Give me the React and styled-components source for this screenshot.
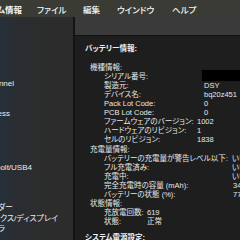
import React from "react";
import styled, { createGlobalStyle } from "styled-components";

const Global = createGlobalStyle`
  html, body { margin: 0; padding: 0; background: #1e1e1e; overflow: hidden; }
  * { box-sizing: border-box; }
`;

const Screen = styled.div`
  width: 240px;
  height: 240px;
  display: flex;
  flex-direction: column;
  overflow: hidden;
  font-family: "Liberation Sans", "Noto Sans CJK JP", sans-serif;
  font-feature-settings: "palt";
  color: #e8e8e8;
`;

const MenuBar = styled.div`
  height: 17px;
  flex: none;
  display: flex;
  align-items: center;
  background: #3b3b36;
  font-size: 8.5px;
  color: #f6f6f6;
  font-weight: 500;
`;

const MenuItem = styled.div`
  width: ${(p) => (p.$w ? `${p.$w}px` : "auto")};
  flex: none;
  display: flex;
  justify-content: ${(p) => (p.$end ? "flex-end" : "flex-start")};
  white-space: nowrap;
  font-weight: ${(p) => (p.$bold ? 700 : 500)};
  margin-right: ${(p) => (p.$mr ? `${p.$mr}px` : "0")};
`;

const Body = styled.div`
  flex: 1;
  display: flex;
  min-height: 0;
`;

const Sidebar = styled.div`
  width: 75px;
  flex: none;
  display: flex;
  flex-direction: column;
  overflow: hidden;
  background: linear-gradient(90deg, #25303a 0px, #2a2d31 18px, #2c2c2c 45px);
  border-right: 2px solid #141414;
  font-size: 8px;
  color: #ececec;
`;

const SideItem = styled.div`
  width: ${(p) => p.$end}px;
  height: 10px;
  line-height: 10px;
  margin-top: ${(p) => p.$mt}px;
  display: flex;
  justify-content: flex-end;
  white-space: nowrap;
`;

const Main = styled.div`
  flex: 1;
  display: flex;
  flex-direction: column;
  min-width: 0;
`;

const Toolbar = styled.div`
  height: 19px;
  flex: none;
  background: #3a3a3a;
  border-bottom: 1px solid #121212;
`;

const Content = styled.div`
  flex: 1;
  background: #1e1e1e;
  padding: 7.5px 0 0 10px;
  overflow: hidden;
  font-size: 7.5px;
  line-height: 9.07px;
  white-space: nowrap;
`;

const Section = styled.div`
  font-weight: 700;
  color: #f2f2f2;
  margin-top: ${(p) => p.$mt || 0}px;
  margin-bottom: ${(p) => p.$mb || 0}px;
`;

const Row = styled.div`
  display: flex;
  align-items: center;
  height: 9.07px;
  padding-left: ${(p) => (p.$level === 1 ? 5 : 19)}px;
`;

const Label = styled.span`
  flex: none;
  width: ${(p) => (p.$w ? `${p.$w}px` : "auto")};
`;

const Value = styled.span`
  flex: none;
`;

const Redacted = styled.span`
  display: inline-block;
  width: 42px;
  height: 11px;
  margin-left: -2px;
  margin-top: -2px;
  background: #000;
  border-radius: 1px;
  box-shadow: 0 0 1px #000;
`;

const Blank = styled.div`
  height: ${(p) => p.$h}px;
`;

const groups = [
  {
    title: "機種情報:",
    rows: [
      ["シリアル番号:", null, 100],
      ["製造元:", "DSY", 100],
      ["デバイス名:", "bq20z451", 100],
      ["Pack Lot Code:", "0", 100],
      ["PCB Lot Code:", "0", 100],
      ["ファームウェアのバージョン:", "1002", 93],
      ["ハードウェアのリビジョン:", "1", 93],
      ["セルのリビジョン:", "1838", 93],
    ],
  },
  {
    title: "充電量情報:",
    rows: [
      ["バッテリーの充電量が警告レベル以下:", "いいえ", 128],
      ["フル充電済み:", "いいえ", 128],
      ["充電中:", "いいえ", 128],
      ["完全充電時の容量 (mAh):", "3445", 129],
      ["バッテリーの状態 (%):", "77", 129],
    ],
  },
  {
    title: "状態情報:",
    rows: [
      ["充放電回数:", "619", 43],
      ["状態:", "正常", 43],
    ],
  },
];

const sideItems = [
  { text: "Fibre Channel", end: 14, mt: 62 },
  { text: "NVMExpress", end: 10, mt: 20 },
  { text: "Thunderbolt/USB4", end: 32, mt: 44 },
  { text: "カードリーダー", end: 13, mt: 30 },
  { text: "グラフィックス/ディスプレイ", end: 58, mt: 1 },
  { text: "コントローラ", end: 5, mt: 0 },
];

export default function App() {
  return (
    <Screen>
      <Global />
      <MenuBar>
        <MenuItem $w={22} $end $bold $mr={15}>システム情報</MenuItem>
        <MenuItem $w={46}>ファイル</MenuItem>
        <MenuItem $w={34}>編集</MenuItem>
        <MenuItem $w={55}>ウインドウ</MenuItem>
        <MenuItem>ヘルプ</MenuItem>
      </MenuBar>
      <Body>
        <Sidebar>
          {sideItems.map((s) => (
            <SideItem key={s.text} $end={s.end} $mt={s.mt}>
              <span>{s.text}</span>
            </SideItem>
          ))}
        </Sidebar>
        <Main>
          <Toolbar />
          <Content>
            <Section $mb={10.4}>バッテリー情報:</Section>
            {groups.map((g) => (
              <React.Fragment key={g.title}>
                <Row $level={1}>
                  <Label>{g.title}</Label>
                </Row>
                {g.rows.map(([label, value, w]) => (
                  <Row key={label} $level={2}>
                    <Label $w={w}>{label}</Label>
                    {value === null ? <Redacted /> : <Value>{value}</Value>}
                  </Row>
                ))}
              </React.Fragment>
            ))}
            <Blank $h={7} />
            <Section>システム電源設定:</Section>
          </Content>
        </Main>
      </Body>
    </Screen>
  );
}
